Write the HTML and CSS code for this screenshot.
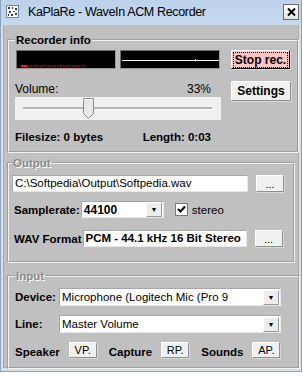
FILE: index.html
```html
<!DOCTYPE html>
<html lang="en">
<head>
    <meta charset="UTF-8">
    <title>KaPlaRe - WaveIn ACM Recorder</title>
    <link rel="stylesheet" href="styles.css">
</head>
<body>
    <div class="window">
        <div class="titlebar">
            <svg class="app-icon" width="13" height="13" viewBox="0 0 13 13">
                <rect x="0.5" y="0.5" width="12" height="12" fill="#fff" stroke="#6a86b0"/>
                <rect x="2" y="2" width="2" height="2" fill="#1f3f8a"/>
                <rect x="6" y="2" width="1" height="2" fill="#1f3f8a"/>
                <rect x="9" y="3" width="2" height="2" fill="#1f3f8a"/>
                <rect x="3" y="6" width="2" height="2" fill="#1f3f8a"/>
                <rect x="7" y="6" width="2" height="1" fill="#1f3f8a"/>
                <rect x="2" y="9" width="1" height="2" fill="#1f3f8a"/>
                <rect x="5" y="9" width="2" height="2" fill="#1f3f8a"/>
                <rect x="9" y="8" width="2" height="2" fill="#1f3f8a"/>
            </svg>
            <span class="title">KaPlaRe - WaveIn ACM Recorder</span>
            <div class="close-btn">
                <svg width="9" height="8" viewBox="0 0 9 8">
                    <path d="M1 0.5 L8 7.5 M8 0.5 L1 7.5" stroke="#000" stroke-width="2"/>
                </svg>
            </div>
        </div>

        <div class="client">
            <fieldset class="group recorder">
                <legend>Recorder info</legend>
                <div class="rec-grid">
                    <div class="rec-left">
                        <div class="meters">
                            <div class="meter">
                                <svg width="98" height="17" viewBox="0 0 98 17">
                                    <rect x="4" y="14" width="6" height="2" fill="#ff1a1a"/>
                                    <line x1="10" y1="15" x2="68" y2="15" stroke="#e01030" stroke-width="1" stroke-dasharray="2 1"/>
                                </svg>
                            </div>
                            <div class="meter">
                                <svg width="98" height="17" viewBox="0 0 98 17">
                                    <line x1="1" y1="9.5" x2="98" y2="9.5" stroke="#fff" stroke-width="1"/>
                                    <rect x="74" y="8" width="1" height="1" fill="#fff"/>
                                </svg>
                            </div>
                        </div>
                        <div class="volume-row">
                            <span>Volume:</span>
                            <span>33%</span>
                        </div>
                        <div class="slider">
                            <div class="track"></div>
                            <svg class="thumb" width="11" height="21" viewBox="0 0 11 21">
                                <path d="M0.5 0.5 H10.5 V15.5 L5.5 20.5 L0.5 15.5 Z" fill="#e8e8e8" stroke="#8a8a8a"/>
                                <path d="M1.5 1.5 H9.5" stroke="#fff"/>
                            </svg>
                        </div>
                        <div class="info-row">
                            <span>Filesize: 0 bytes</span>
                            <span>Length: 0:03</span>
                        </div>
                    </div>
                    <div class="rec-right">
                        <button class="btn stop-btn"><span class="focus">Stop rec.</span></button>
                        <button class="btn settings-btn">Settings</button>
                    </div>
                </div>
            </fieldset>

            <fieldset class="group output">
                <legend class="disabled">Output</legend>
                <div class="row path-row">
                    <div class="textbox path-box">C:\Softpedia\Output\Softpedia.wav</div>
                    <button class="btn small-btn">...</button>
                </div>
                <div class="row rate-row">
                    <span class="label">Samplerate:</span>
                    <div class="combo rate-combo">
                        <span class="combo-text bold">44100</span>
                        <span class="arrow">&#9660;</span>
                    </div>
                    <span class="checkbox">
                        <svg width="9" height="9" viewBox="0 0 9 9">
                            <path d="M1 4 L3.5 6.5 L8 1.5" stroke="#000" stroke-width="2" fill="none"/>
                        </svg>
                    </span>
                    <span class="check-label">stereo</span>
                </div>
                <div class="row wav-row">
                    <span class="label">WAV Format</span>
                    <div class="textbox wav-box bold">PCM - 44.1 kHz 16 Bit Stereo</div>
                    <button class="btn small-btn">...</button>
                </div>
            </fieldset>

            <fieldset class="group input">
                <legend class="disabled">Input</legend>
                <div class="row device-row">
                    <span class="label short">Device:</span>
                    <div class="combo wide-combo">
                        <span class="combo-text">Microphone (Logitech Mic (Pro 9</span>
                        <span class="arrow">&#9660;</span>
                    </div>
                </div>
                <div class="row line-row">
                    <span class="label short">Line:</span>
                    <div class="combo wide-combo">
                        <span class="combo-text">Master Volume</span>
                        <span class="arrow">&#9660;</span>
                    </div>
                </div>
                <div class="row panel-row">
                    <span class="label">Speaker</span>
                    <button class="btn panel-btn">VP.</button>
                    <span class="label">Capture</span>
                    <button class="btn panel-btn">RP.</button>
                    <span class="label">Sounds</span>
                    <button class="btn panel-btn">AP.</button>
                </div>
            </fieldset>
        </div>
    </div>
</body>
</html>
```

FILE: styles.css
```css
body {
    margin: 0;
    background-color: #ffffff;
    font-family: 'Liberation Sans', Arial, sans-serif;
    font-size: 11px;
    color: #000000;
}
.window {
    width: 302px;
    height: 372px;
    border: 1px solid #8da2bd;
    border-top: none;
    background: linear-gradient(#bcd2ea, #c6d9ef 25px, #d7dfe8 26px);
    box-sizing: border-box;
    padding: 0 2px 4px 2px;
}
.titlebar {
    height: 25px;
    display: flex;
    align-items: center;
    padding-left: 3px;
}
.app-icon {
    margin-right: 9px;
    margin-top: -2px;
}
.title {
    font-family: 'Liberation Sans', Arial, sans-serif;
    font-size: 12.5px;
    letter-spacing: -0.35px;
    color: #000000;
    flex: 1;
    margin-top: -1px;
}
.close-btn {
    width: 14px;
    height: 14px;
    border: 1px solid #6b6b6b;
    background: linear-gradient(#fbfbfb, #e4e4e4);
    display: flex;
    align-items: center;
    justify-content: center;
    margin-right: 0;
    margin-top: -1px;
}
.client {
    background-color: #c0c0c0;
    height: 343px;
    padding: 9px 3px 0 3px;
    border: 1px solid #a9a9a9;
    border-top: none;
    box-sizing: border-box;
}
.group {
    margin: 0;
    border: 2px groove #f2f2f2;
    padding: 0 6px;
}
.group legend {
    font-weight: bold;
    font-size: 11.5px;
    padding: 0 1px;
    margin-left: 0;
}
.group legend.disabled {
    color: #8a8a8a;
    text-shadow: 1px 1px 0 #ffffff;
}
.recorder {
    height: 119px;
    box-sizing: border-box;
}
.rec-grid {
    display: flex;
    padding-top: 4px;
}
.rec-left {
    width: 206px;
}
.meters {
    display: flex;
    gap: 4px;
    margin-left: 1px;
}
.meter {
    width: 98px;
    height: 17px;
    background-color: #000000;
    border: 1px solid #6e6e6e;
    border-right-color: #9a9a9a;
    border-bottom-color: #9a9a9a;
}
.meter svg {
    display: block;
}
.volume-row {
    display: flex;
    justify-content: space-between;
    font-size: 12px;
    margin-top: 13px;
    padding-right: 10px;
    height: 15px;
}
.slider {
    position: relative;
    height: 23px;
    background-color: #f0f0f0;
}
.track {
    position: absolute;
    left: 8px;
    right: 9px;
    top: 10px;
    height: 2px;
    background-color: #b4b4b4;
    border-bottom: 1px solid #ffffff;
}
.thumb {
    position: absolute;
    left: 68px;
    top: 1px;
}
.info-row {
    display: flex;
    justify-content: space-between;
    font-weight: bold;
    font-size: 11.5px;
    margin-top: 11px;
    padding-right: 10px;
}
.rec-right {
    margin-left: 10px;
    display: flex;
    flex-direction: column;
    gap: 12px;
}
.btn {
    font-family: 'Liberation Sans', Arial, sans-serif;
    font-size: 11px;
    background-color: #f0f0f0;
    border: 1px solid #8f8f8f;
    border-top-color: #ffffff;
    border-left-color: #ffffff;
    box-shadow: 1px 1px 0 #d8d8d8;
    padding: 0;
    color: #000000;
    box-sizing: border-box;
    flex-shrink: 0;
}
.stop-btn {
    width: 59px;
    height: 19px;
    background-color: #ffc4c4;
    border: 1px solid #000000;
    border-top-color: #ffffff;
    border-left-color: #ffffff;
    font-weight: bold;
    font-size: 12px;
}
.focus {
    border: 1px dotted #000000;
    padding: 0 1px;
}
.settings-btn {
    width: 60px;
    height: 20px;
    font-weight: bold;
    font-size: 12px;
}
.output {
    margin-top: 4px;
    height: 106px;
    box-sizing: border-box;
    padding-left: 3px;
}
.row {
    display: flex;
    align-items: center;
}
.path-row {
    margin-top: 6px;
}
.textbox {
    height: 17px;
    box-sizing: border-box;
    background-color: #ffffff;
    border: 1px solid #a8a8a8;
    border-right-color: #e8e8e8;
    border-bottom-color: #e8e8e8;
    padding-left: 2px;
    line-height: 15px;
    white-space: nowrap;
    overflow: hidden;
}
.path-box {
    width: 236px;
    font-size: 11.5px;
}
.small-btn {
    width: 28px;
    height: 17px;
    margin-left: 8px;
    line-height: 10px;
}
.label {
    font-weight: bold;
    font-size: 11.5px;
}
.bold {
    font-weight: bold;
}
.rate-row {
    margin-top: 9px;
    padding-left: 2px;
}
.combo {
    height: 17px;
    box-sizing: border-box;
    background-color: #ffffff;
    border: 1px solid #a8a8a8;
    border-right-color: #e8e8e8;
    border-bottom-color: #e8e8e8;
    display: flex;
    align-items: center;
}
.combo-text {
    flex: 1;
    padding-left: 2px;
    font-size: 11.5px;
    white-space: nowrap;
    overflow: hidden;
}
.arrow {
    width: 14px;
    height: 13px;
    margin-right: 1px;
    background-color: #ececec;
    border: 1px solid #9a9a9a;
    border-top-color: #ffffff;
    border-left-color: #ffffff;
    font-size: 7px;
    line-height: 13px;
    text-align: center;
}
.rate-combo {
    width: 83px;
    margin-left: 1px;
}
.rate-combo .combo-text {
    font-size: 12px;
}
.checkbox {
    width: 11px;
    height: 11px;
    border: 1px solid #7a7a7a;
    background-color: #ffffff;
    margin-left: 11px;
    display: flex;
    align-items: center;
    justify-content: center;
}
.check-label {
    margin-left: 4px;
    font-size: 11.5px;
}
.wav-row {
    margin-top: 12px;
    padding-left: 2px;
}
.wav-box {
    width: 164px;
    margin-left: 1px;
    font-size: 11.5px;
}
.input {
    margin-top: 7px;
    height: 99px;
    box-sizing: border-box;
}
.device-row {
    margin-top: 6px;
}
.short {
    width: 44px;
}
.wide-combo {
    width: 222px;
    height: 18px;
}
.line-row {
    margin-top: 9px;
}
.panel-row {
    margin-top: 9px;
    align-items: flex-end;
}
.panel-btn {
    width: 28px;
    height: 16px;
    margin: 0 12px 0 9px;
    line-height: 10px;
}
```
